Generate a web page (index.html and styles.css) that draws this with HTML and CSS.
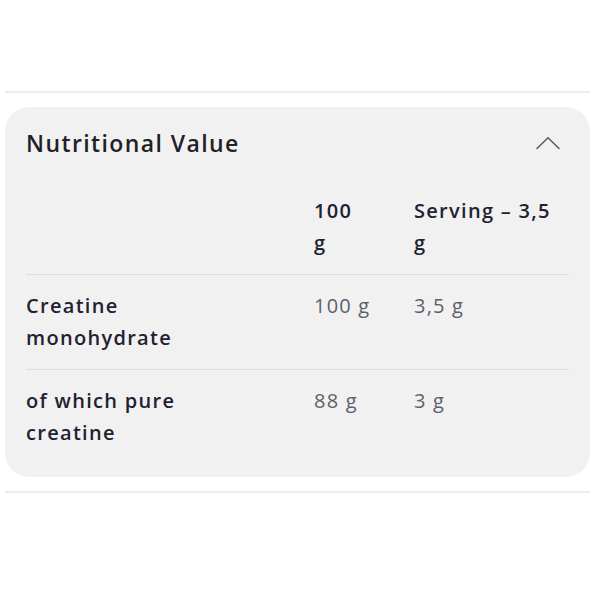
FILE: index.html
```html
<!DOCTYPE html>
<html>
<head>
<meta charset="utf-8">
<link rel="stylesheet" href="styles.css">
</head>
<body>
<div class="page">
  <hr class="rule rule-top">
  <section class="card">
    <div class="card-head">
      <h2 class="title">Nutritional Value</h2>
      <svg class="chev" width="26" height="14" viewBox="0 0 26 14"><path d="M2 12.5 L13 1.8 L24 12.5" fill="none" stroke="#5e5e5e" stroke-width="1.6" stroke-linecap="round" stroke-linejoin="round"/></svg>
    </div>
    <div class="table">
      <div class="row head">
        <div class="c c1"></div>
        <div class="c c2">100 g</div>
        <div class="c c3">Serving – 3,5 g</div>
      </div>
      <div class="row">
        <div class="c c1 label">Creatine monohydrate</div>
        <div class="c c2 val">100 g</div>
        <div class="c c3 val">3,5 g</div>
      </div>
      <div class="row last">
        <div class="c c1 label">of which pure creatine</div>
        <div class="c c2 val">88 g</div>
        <div class="c c3 val">3 g</div>
      </div>
    </div>
  </section>
  <hr class="rule rule-bottom">
</div>
</body>
</html>
```
FILE: styles.css
```css
html, body { margin: 0; padding: 0; background: #fff; }
body { font-family: "Open Sans", "DejaVu Sans", sans-serif; color: #1f2230; }
.page { padding: 91px 5px 0 5px; }
.rule { border: 0; height: 2px; background: #ececec; margin: 0; }
.rule-bottom { margin-top: 14px; }
.card {
  margin-top: 14px;
  background: #f1f1f1;
  border-radius: 24px;
  padding: 20px 21px 28px 21px;
}
.card-head { display: flex; align-items: center; justify-content: space-between; height: 32px; }
.title { margin: 0; font-size: 23px; font-weight: 600; color: #1f2126; letter-spacing: 1.4px; }
.chev { margin-right: 8px; margin-top: 0; }
.table { margin-top: 36px; }
.row { display: flex; border-bottom: 1.5px solid #dcdde0; padding: 15px 0; }
.row.head { padding-top: 0; }
.row.last { border-bottom: 0; padding-bottom: 0; }
.c { font-size: 20px; line-height: 32px; letter-spacing: 1.3px; }
.c1 { width: 288px; padding-right: 98px; box-sizing: border-box; }
.c2 { width: 100px; padding-right: 54px; box-sizing: border-box; }
.c3 { width: 155px; padding-right: 10px; box-sizing: border-box; }
.head .c { font-weight: 600; color: #1f2230; }
.label { font-weight: 600; color: #1f2230; }
.val { font-weight: 400; color: #5c606b; letter-spacing: 1.2px; white-space: nowrap; }
```
